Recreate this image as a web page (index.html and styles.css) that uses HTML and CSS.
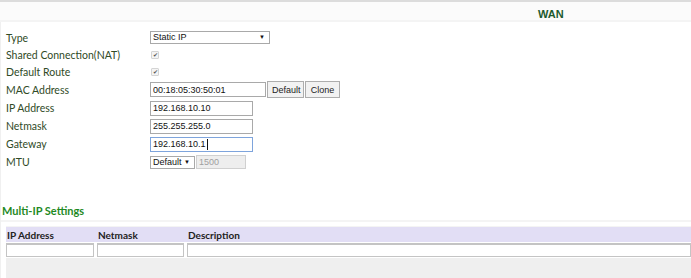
FILE: index.html
```html
<!DOCTYPE html>
<html lang="en">
<head>
<meta charset="utf-8">
<title>WAN</title>
<link rel="stylesheet" href="styles.css">
</head>
<body>

<div class="topline"></div>
<div class="page-head"><span class="page-title">WAN</span></div>

<div class="panel">
	<div class="form-grid">
		<label class="row-label">Type</label>
		<div class="row-field">
			<div class="fake-select sel-type">Static IP<span class="arrow">&#9660;</span></div>
		</div>

		<label class="row-label">Shared Connection(NAT)</label>
		<div class="row-field"><span class="check">&#10004;</span></div>

		<label class="row-label">Default Route</label>
		<div class="row-field"><span class="check">&#10004;</span></div>

		<label class="row-label">MAC Address</label>
		<div class="row-field">
			<input type="text" class="txt txt-mac" value="00:18:05:30:50:01">
			<button class="btn btn-default">Default</button><button class="btn btn-clone">Clone</button>
		</div>

		<label class="row-label">IP Address</label>
		<div class="row-field"><input type="text" class="txt" value="192.168.10.10"></div>

		<label class="row-label">Netmask</label>
		<div class="row-field"><input type="text" class="txt" value="255.255.255.0"></div>

		<label class="row-label">Gateway</label>
		<div class="row-field"><input type="text" class="txt txt-focus" value="192.168.10.1"><span class="caret"></span></div>

		<label class="row-label">MTU</label>
		<div class="row-field">
			<div class="fake-select sel-mtu">Default<span class="arrow">&#9660;</span></div>
			<input type="text" class="txt txt-mtu" value="1500" disabled>
		</div>
	</div>

	<h3 class="sub-title">Multi-IP Settings</h3>

	<table class="ip-table">
		<thead>
			<tr>
				<th class="col-ip">IP Address</th>
				<th class="col-mask">Netmask</th>
				<th>Description</th>
			</tr>
		</thead>
		<tbody>
			<tr>
				<td><input type="text" class="cell-input"></td>
				<td><input type="text" class="cell-input"></td>
				<td class="last"><input type="text" class="cell-input"></td>
			</tr>
		</tbody>
	</table>
	<div class="table-foot"></div>
</div>

</body>
</html>
```

FILE: styles.css
```css
html {
	font-family: 'Lato', 'Open Sans', sans-serif;
}

body {
	margin: 0;
	background: #fff;
	overflow: hidden;
}

.topline {
	background: #dcdcdc;
	height: 2px;
}

.page-head {
	background: #fbfbfb;
	border-bottom: 2px solid #f4f4f4;
	height: 18px;
	line-height: 19px;
	padding-left: 538px;
}

.page-title {
	color: #1d5a2e;
	font-family: 'Liberation Sans', sans-serif;
	font-size: 11px;
	font-weight: bold;
}

.panel {
	border-left: 1px solid #f0f0f0;
	padding-top: 7px;
}

.form-grid {
	display: grid;
	grid-template-columns: 144px 1fr;
	grid-template-rows: 17px 17px 17px 19px 18px 18px 18px 18px;
	padding-left: 5px;
}

.row-label {
	align-items: center;
	color: #2f4a26;
	display: flex;
	font-size: 10.5px;
	white-space: nowrap;
}

.row-field {
	align-items: center;
	display: flex;
	position: relative;
}

.fake-select {
	background: #fff;
	border: 1px solid #a9a9a9;
	box-sizing: border-box;
	color: #111;
	display: flex;
	font-family: 'Liberation Sans', sans-serif;
	font-size: 9px;
	height: 13px;
	justify-content: space-between;
	line-height: 11px;
	padding: 0 4px 0 2px;
}

.arrow {
	font-size: 6px;
}

.sel-type {
	width: 120px;
}

.sel-mtu {
	width: 45px;
}

.check {
	background: #f4f4f4;
	border: 1px solid #d4d4d4;
	border-radius: 1px;
	color: #555;
	font-size: 6px;
	height: 6px;
	line-height: 6px;
	margin-left: 1px;
	text-align: center;
	width: 6px;
}

.txt {
	border: 1px solid #a9a9a9;
	box-sizing: border-box;
	color: #111;
	font-family: 'Liberation Sans', sans-serif;
	font-size: 9px;
	height: 15px;
	margin: 0;
	padding: 0 2px;
	width: 103px;
}

.txt-mac {
	width: 116px;
}

.txt-focus {
	border-color: #7ea4dc;
}

.caret {
	background: #111;
	height: 11px;
	left: 57px;
	position: absolute;
	top: 4px;
	width: 1px;
}

.txt-mtu {
	background: #eee;
	border-color: #d0d0d0;
	color: #a0a0a0;
	height: 14px;
	margin-left: 1px;
	width: 50px;
}

.btn {
	background: #f2f2f2;
	border: 1px solid #adadad;
	box-sizing: border-box;
	color: #222;
	font-family: 'Liberation Sans', sans-serif;
	font-size: 9px;
	height: 17px;
	margin: 0 0 0 1px;
	padding: 0 4px;
}

.btn-default {
	width: 37px;
}

.btn-clone {
	width: 35px;
}

.sub-title {
	border-bottom: 2px solid #f4f4f4;
	color: #1f8a1f;
	font-size: 11px;
	font-weight: bold;
	height: 18px;
	line-height: 18px;
	margin: 31px 0 0 0;
	padding-left: 1px;
}

.ip-table {
	border-collapse: separate;
	border-spacing: 0;
	margin: 4px 0 0 5px;
	width: 685px;
}

.ip-table th {
	background: #e2def5;
	border-top: 1px solid #f4f4f4;
	box-sizing: border-box;
	color: #222;
	font-size: 10px;
	font-weight: bold;
	height: 16px;
	padding: 0 0 0 1px;
	text-align: left;
}

.ip-table td {
	box-sizing: border-box;
	padding: 1px 3px 1px 0;
}

.ip-table td.last {
	padding-right: 0;
}

.col-ip {
	width: 91px;
}

.col-mask {
	width: 90px;
}

.cell-input {
	border: 1px solid #c4c4c4;
	border-top-width: 2px;
	box-sizing: border-box;
	display: block;
	height: 14px;
	margin: 0;
	width: 100%;
}

.table-foot {
	background: #efefef;
	height: 20px;
	margin-left: 5px;
}
```
